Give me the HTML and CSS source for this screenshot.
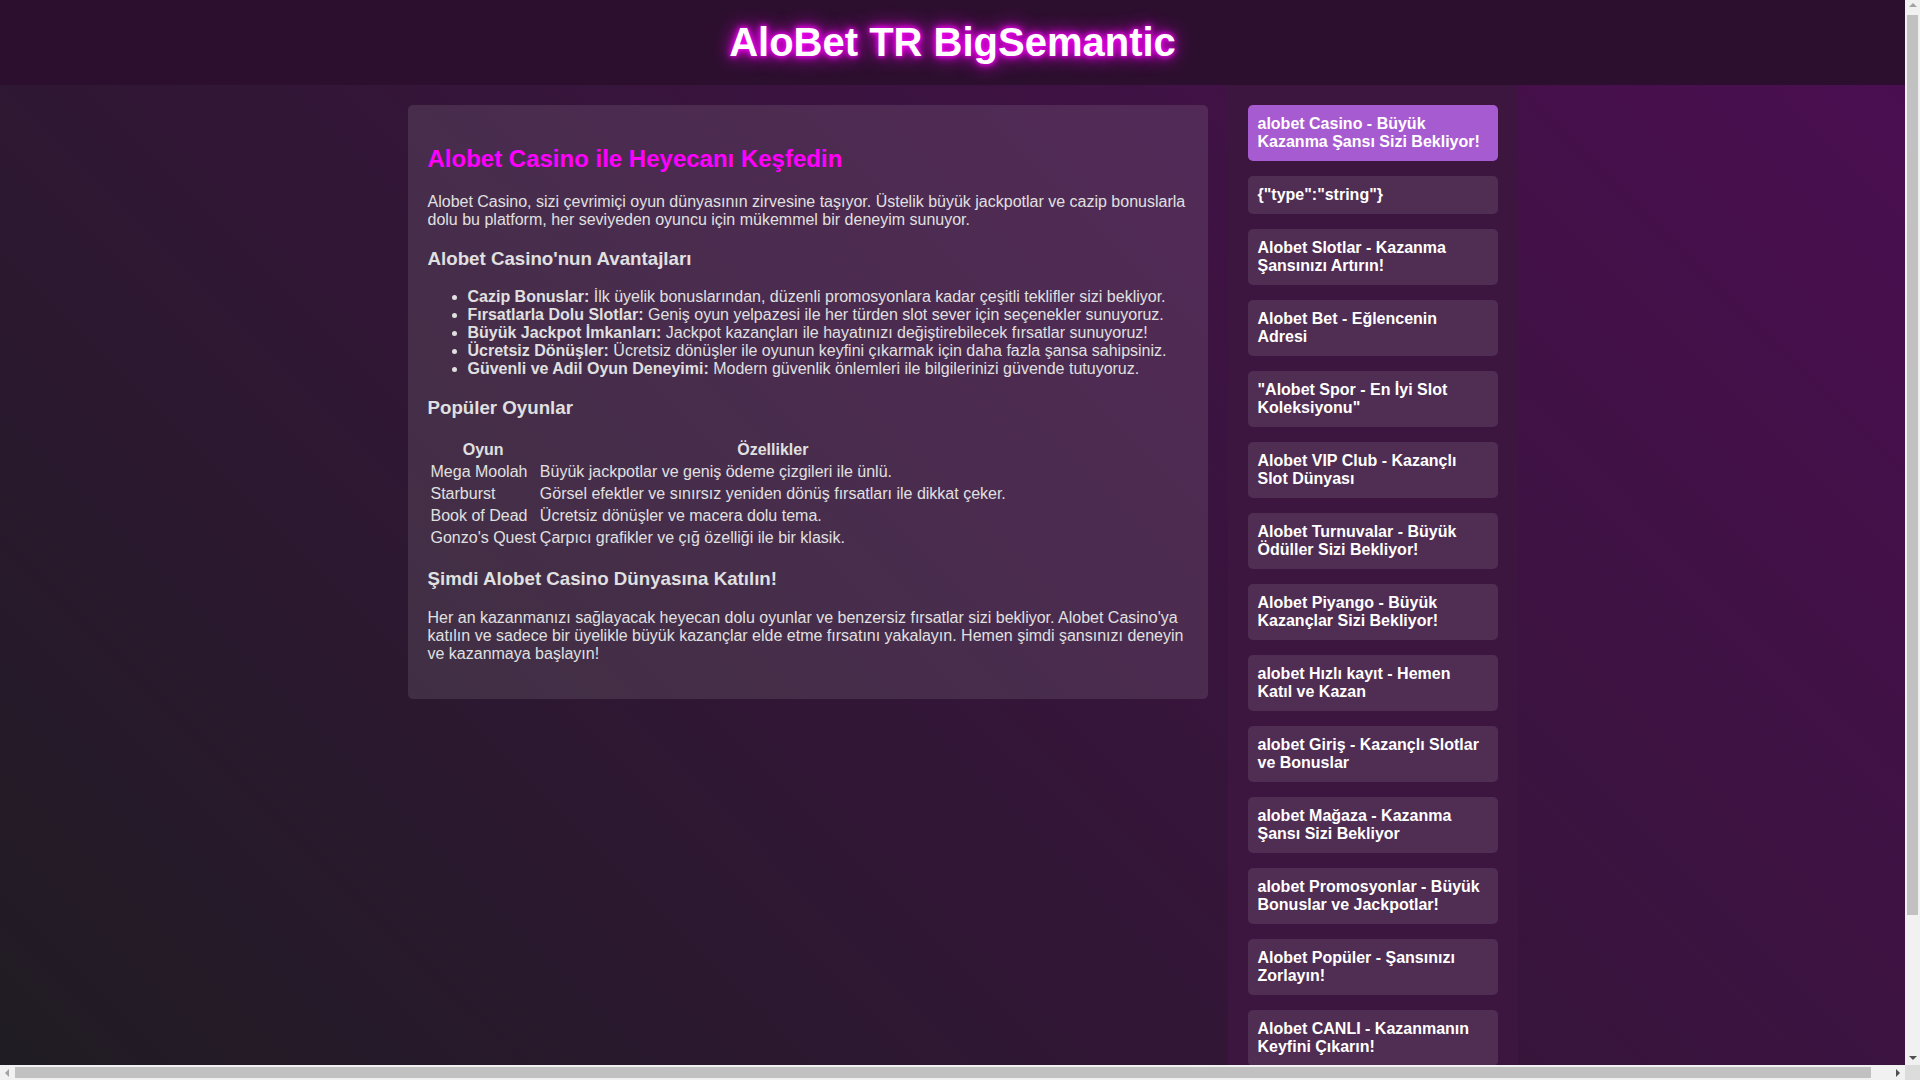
FILE: index.html
```html
<!DOCTYPE html>
<html lang="tr">
<head>
<meta charset="utf-8">
<title>AloBet TR BigSemantic</title>
<link rel="stylesheet" href="styles.css">
</head>
<body>
<header class="site-header">
  <h1 class="site-title">AloBet TR BigSemantic</h1>
</header>
<div class="layout">
  <main class="content-card">
    <h2 class="card-title">Alobet Casino ile Heyecanı Keşfedin</h2>
    <p>Alobet Casino, sizi çevrimiçi oyun dünyasının zirvesine taşıyor. Üstelik büyük jackpotlar ve cazip bonuslarla dolu bu platform, her seviyeden oyuncu için mükemmel bir deneyim sunuyor.</p>
    <h3>Alobet Casino'nun Avantajları</h3>
    <ul>
      <li><strong>Cazip Bonuslar:</strong> İlk üyelik bonuslarından, düzenli promosyonlara kadar çeşitli teklifler sizi bekliyor.</li>
      <li><strong>Fırsatlarla Dolu Slotlar:</strong> Geniş oyun yelpazesi ile her türden slot sever için seçenekler sunuyoruz.</li>
      <li><strong>Büyük Jackpot İmkanları:</strong> Jackpot kazançları ile hayatınızı değiştirebilecek fırsatlar sunuyoruz!</li>
      <li><strong>Ücretsiz Dönüşler:</strong> Ücretsiz dönüşler ile oyunun keyfini çıkarmak için daha fazla şansa sahipsiniz.</li>
      <li><strong>Güvenli ve Adil Oyun Deneyimi:</strong> Modern güvenlik önlemleri ile bilgilerinizi güvende tutuyoruz.</li>
    </ul>
    <h3>Popüler Oyunlar</h3>
    <table class="games">
      <tr><th>Oyun</th><th>Özellikler</th></tr>
      <tr><td>Mega Moolah</td><td>Büyük jackpotlar ve geniş ödeme çizgileri ile ünlü.</td></tr>
      <tr><td>Starburst</td><td>Görsel efektler ve sınırsız yeniden dönüş fırsatları ile dikkat çeker.</td></tr>
      <tr><td>Book of Dead</td><td>Ücretsiz dönüşler ve macera dolu tema.</td></tr>
      <tr><td>Gonzo's Quest</td><td>Çarpıcı grafikler ve çığ özelliği ile bir klasik.</td></tr>
    </table>
    <h3>Şimdi Alobet Casino Dünyasına Katılın!</h3>
    <p>Her an kazanmanızı sağlayacak heyecan dolu oyunlar ve benzersiz fırsatlar sizi bekliyor. Alobet Casino'ya katılın ve sadece bir üyelikle büyük kazançlar elde etme fırsatını yakalayın. Hemen şimdi şansınızı deneyin ve kazanmaya başlayın!</p>
  </main>
  <aside class="sidebar">
    <a class="side-link active" href="#">alobet Casino - Büyük Kazanma Şansı Sizi Bekliyor!</a>
    <a class="side-link" href="#">{"type":"string"}</a>
    <a class="side-link" href="#">Alobet Slotlar - Kazanma Şansınızı Artırın!</a>
    <a class="side-link" href="#">Alobet Bet - Eğlencenin Adresi</a>
    <a class="side-link" href="#">"Alobet Spor - En İyi Slot Koleksiyonu"</a>
    <a class="side-link" href="#">Alobet VIP Club - Kazançlı Slot Dünyası</a>
    <a class="side-link" href="#">Alobet Turnuvalar - Büyük Ödüller Sizi Bekliyor!</a>
    <a class="side-link" href="#">Alobet Piyango - Büyük Kazançlar Sizi Bekliyor!</a>
    <a class="side-link" href="#">alobet Hızlı kayıt - Hemen Katıl ve Kazan</a>
    <a class="side-link" href="#">alobet Giriş - Kazançlı Slotlar ve Bonuslar</a>
    <a class="side-link" href="#">alobet Mağaza - Kazanma Şansı Sizi Bekliyor</a>
    <a class="side-link" href="#">alobet Promosyonlar - Büyük Bonuslar ve Jackpotlar!</a>
    <a class="side-link" href="#">Alobet Popüler - Şansınızı Zorlayın!</a>
    <a class="side-link" href="#">Alobet CANLI - Kazanmanın Keyfini Çıkarın!</a>
  </aside>
</div>
<div class="fake-vscroll" aria-hidden="true">
  <span class="arrow arrow-up"></span>
  <span class="vthumb"></span>
  <span class="arrow arrow-down"></span>
</div>
<div class="fake-hscroll" aria-hidden="true">
  <span class="arrow arrow-left"></span>
  <span class="hthumb"></span>
  <span class="arrow arrow-right"></span>
</div>
<div class="fake-corner" aria-hidden="true"></div>
</body>
</html>
```

FILE: styles.css
```css
html {
  background: linear-gradient(45deg, #1f1c22, #4c0e52);
  min-height: 100%;
  overflow: hidden;
}
body {
  margin: 0 15px 0 0;
  font-family: "Liberation Sans", Arial, sans-serif;
  font-size: 16px;
  color: #e0e0e0;
}
.site-header {
  background: #2c0f2e;
  padding: 20px 0 20px;
  text-align: center;
}
.site-title {
  margin: 0;
  font-size: 40px;
  font-weight: bold;
  color: #ffffff;
  text-shadow: 0 0 5px #ff00ff, 0 0 10px #ff00ff, 0 0 20px #ff00ff;
}
.layout {
  display: flex;
  justify-content: center;
  gap: 20px;
  width: 100%;
  padding: 0 10px;
}
.content-card {
  box-sizing: border-box;
  width: 800px;
  flex: none;
  align-self: flex-start;
  margin-top: 20px;
  padding: 20px;
  background: rgba(255, 255, 255, 0.1);
  border-radius: 5px;
}
.card-title {
  color: #ff00ff;
  font-size: 24px;
  margin: 19.9px 0;
}
.content-card h3 {
  font-size: 18.72px;
  margin: 18.72px 0;
}
.content-card p {
  margin: 16px 0;
}
.content-card ul {
  margin: 16px 0;
  padding-left: 40px;
}
.games {
  border-spacing: 2px;
}
.games th,
.games td {
  padding: 1px;
}
.sidebar {
  box-sizing: border-box;
  width: 290px;
  flex: none;
  padding: 20px;
  background: #3d1640;
}
.side-link {
  display: block;
  margin-bottom: 15px;
  padding: 10px;
  line-height: 18px;
  border-radius: 5px;
  background: rgba(255, 255, 255, 0.1);
  color: #ffffff;
  font-weight: bold;
  text-decoration: none;
}
.side-link.active {
  background: #a75bd1;
}

/* browser scrollbars as seen in the screenshot */
.fake-vscroll {
  position: fixed;
  top: 0;
  right: 0;
  width: 15px;
  height: 1065px;
  background: #f1f1f1;
}
.fake-hscroll {
  position: fixed;
  left: 0;
  bottom: 0;
  width: 1905px;
  height: 15px;
  background: #f1f1f1;
}
.fake-corner {
  position: fixed;
  right: 0;
  bottom: 0;
  width: 15px;
  height: 15px;
  background: #dcdcdc;
}
.vthumb {
  position: absolute;
  left: 2px;
  top: 15px;
  width: 11px;
  height: 900px;
  background: #c1c1c1;
}
.hthumb {
  position: absolute;
  top: 2px;
  left: 15px;
  width: 1856px;
  height: 11px;
  background: #c1c1c1;
}
.arrow {
  position: absolute;
  width: 0;
  height: 0;
  border: 4px solid transparent;
}
.arrow-up {
  left: 3.5px;
  top: 3px;
  border-bottom-color: #a3a3a3;
  border-width: 0 4px 4px;
}
.arrow-down {
  left: 3.5px;
  bottom: 5px;
  border-top-color: #505050;
  border-width: 4px 4px 0;
}
.arrow-left {
  top: 3.5px;
  left: 5px;
  border-right-color: #a3a3a3;
  border-width: 4px 4px 4px 0;
}
.arrow-right {
  top: 3.5px;
  right: 5px;
  border-left-color: #505050;
  border-width: 4px 0 4px 4px;
}
```
